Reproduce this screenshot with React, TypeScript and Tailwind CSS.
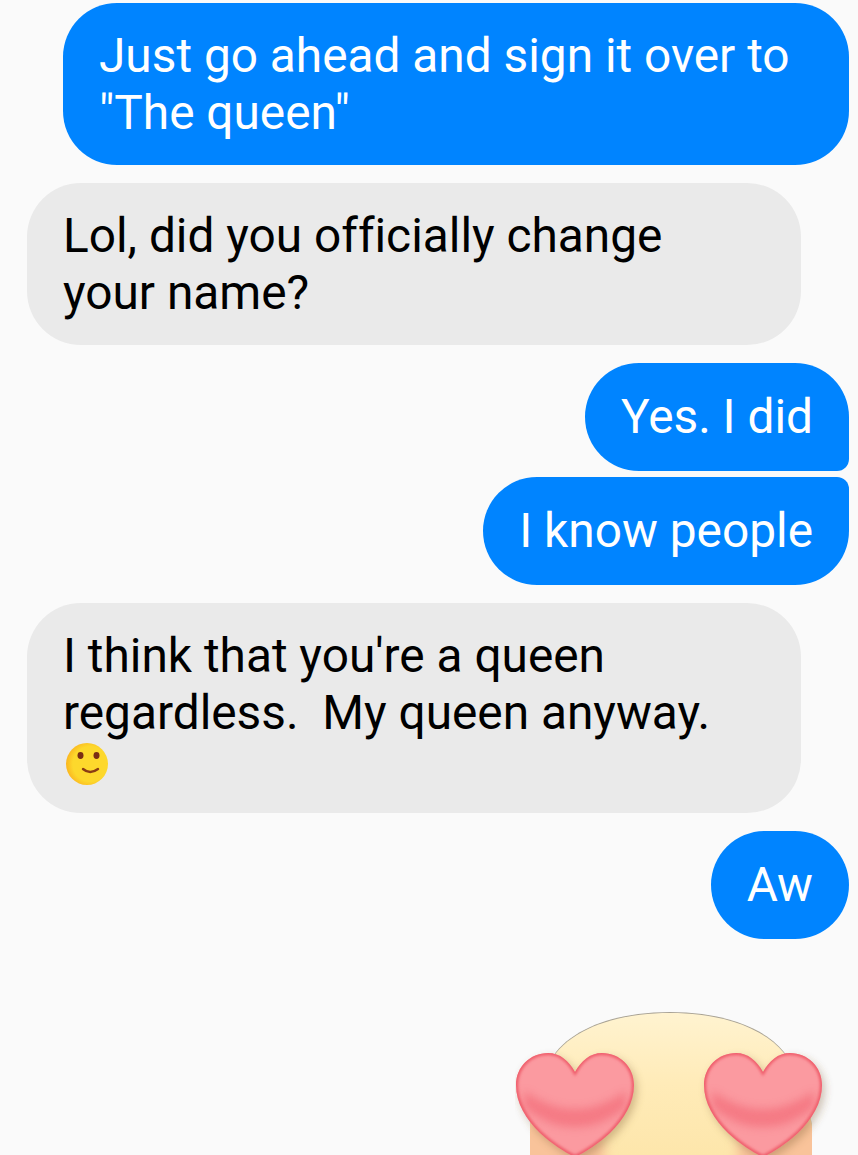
const font = "font-['Roboto',sans-serif]";
const text = "text-[47.8px] leading-[57px] [font-variant-ligatures:none] whitespace-pre";
function Me({ children, cls }: { children: React.ReactNode; cls: string }) {
  return <div className={`self-end bg-[#0084ff] text-white px-[36px] ${text} ${cls}`}>{children}</div>;
}
function Them({ children, cls = "" }: { children: React.ReactNode; cls?: string }) {
  return <div className={`w-[774px] ml-[27px] mt-[18px] bg-[#eaeaea] text-black px-[36px] pt-[25px] rounded-[54px] ${text} ${cls}`}>{children}</div>;
}
function Smile() {
  return (
    <svg width="44" height="44" viewBox="0 0 44 44" className="block ml-[2px]">
      <defs>
        <radialGradient id="sm" cx="0.58" cy="0.5" r="0.58">
          <stop offset="0.72" stopColor="#fdd82c" />
          <stop offset="1" stopColor="#fbb61f" />
        </radialGradient>
      </defs>
      <circle cx="22" cy="22" r="21" fill="url(#sm)" />
      <ellipse cx="15.5" cy="13.5" rx="3" ry="3.4" fill="#7a2c14" />
      <ellipse cx="31.5" cy="13.5" rx="3" ry="3.4" fill="#7a2c14" />
      <path d="M18 27 Q25 33 33 27" fill="none" stroke="#8a3c14" strokeWidth="2.4" strokeLinecap="round" />
    </svg>
  );
}
const faceD = "M15 146 L15 118 C17 95 25 66 41 44 C62 18 105 4 155 4 C205 4 248 18 269 44 C283 66 294 95 297 118 L297 146 Z";
const heartD = "M59 19 C53 8 44 0 32 0 C14 0 0 14 0 32 C0 50 10 66 24 80 C36 91 48 99 59 104 C70 99 82 91 94 80 C108 66 118 50 118 32 C118 14 104 0 86 0 C74 0 65 8 59 19 Z";
function Heart({ x }: { x: number }) {
  return (
    <g transform={`translate(${x},44)`}>
      <path d={heartD} fill="#7a5a30" opacity="0.35" filter="url(#soft)" transform="translate(3,4)" />
      <path d={heartD} fill="#fb9aa0" />
      <g clipPath="url(#heartclip)">
        <path d="M8 38 C28 52 45 56 59 56 C73 56 90 52 110 38 L110 54 C90 70 75 74 59 74 C43 74 28 70 8 54 Z" fill="#f36f7b" opacity="0.75" filter="url(#soft)" />
        <path d={heartD} fill="none" stroke="#ee5866" strokeWidth="4" filter="url(#edge)" />
      </g>
    </g>
  );
}
export default function App() {
  return (
    <div className={`w-[858px] h-[1155px] overflow-hidden bg-[#fafafa] flex flex-col pr-[9px] pt-[3px] ${font}`}>
      <Me cls="w-[786px] h-[162px] pt-[25px] rounded-[54px]">{'Just go ahead and sign it over to\n"The queen"'}</Me>
      <Them cls="h-[162px]">{'Lol, did you officially change\nyour name?'}</Them>
      <Me cls="mt-[18px] h-[108px] pt-[26px] rounded-t-[54px] rounded-bl-[54px] rounded-br-[12px]">Yes. I did</Me>
      <Me cls="mt-[6px] h-[108px] pt-[26px] rounded-b-[54px] rounded-tl-[54px] rounded-tr-[12px]">I know people</Me>
      <Them cls="h-[210px]">{"I think that you're a queen\nregardless.  My queen anyway."}<Smile /></Them>
      <Me cls="mt-[18px] h-[108px] pt-[26px] rounded-[54px]">Aw</Me>
      <div className="self-end mt-[70px] mr-[14px] shrink-0">
        <svg width="320" height="146" viewBox="0 0 320 146" className="block">
          <defs>
            <linearGradient id="face" x1="0" y1="0" x2="0" y2="1">
              <stop offset="0" stopColor="#fff3d0" />
              <stop offset="0.5" stopColor="#ffebb8" />
              <stop offset="1" stopColor="#fde6ab" />
            </linearGradient>
            <filter id="blur" x="-30%" y="-30%" width="160%" height="160%">
              <feGaussianBlur stdDeviation="6" />
            </filter>
            <filter id="soft" x="-30%" y="-30%" width="160%" height="160%">
              <feGaussianBlur stdDeviation="4" />
            </filter>
            <filter id="edge" x="-10%" y="-10%" width="120%" height="120%">
              <feGaussianBlur stdDeviation="1.6" />
            </filter>
            <filter id="all" x="-5%" y="-5%" width="110%" height="110%">
              <feGaussianBlur stdDeviation="0.6" />
            </filter>
            <clipPath id="faceclip"><path d={faceD} /></clipPath>
            <clipPath id="heartclip"><path d={heartD} /></clipPath>
          </defs>
          <g filter="url(#all)">
            <path d={faceD} fill="#a8a294" transform="translate(0,-1)" />
            <path d={faceD} fill="url(#face)" />
            <g clipPath="url(#faceclip)">
              <ellipse cx="42" cy="146" rx="48" ry="42" fill="#f9c39a" filter="url(#blur)" />
              <ellipse cx="270" cy="146" rx="48" ry="42" fill="#f9c39a" filter="url(#blur)" />
            </g>
            <Heart x={1} />
            <Heart x={189} />
          </g>
        </svg>
      </div>
    </div>
  );
}
